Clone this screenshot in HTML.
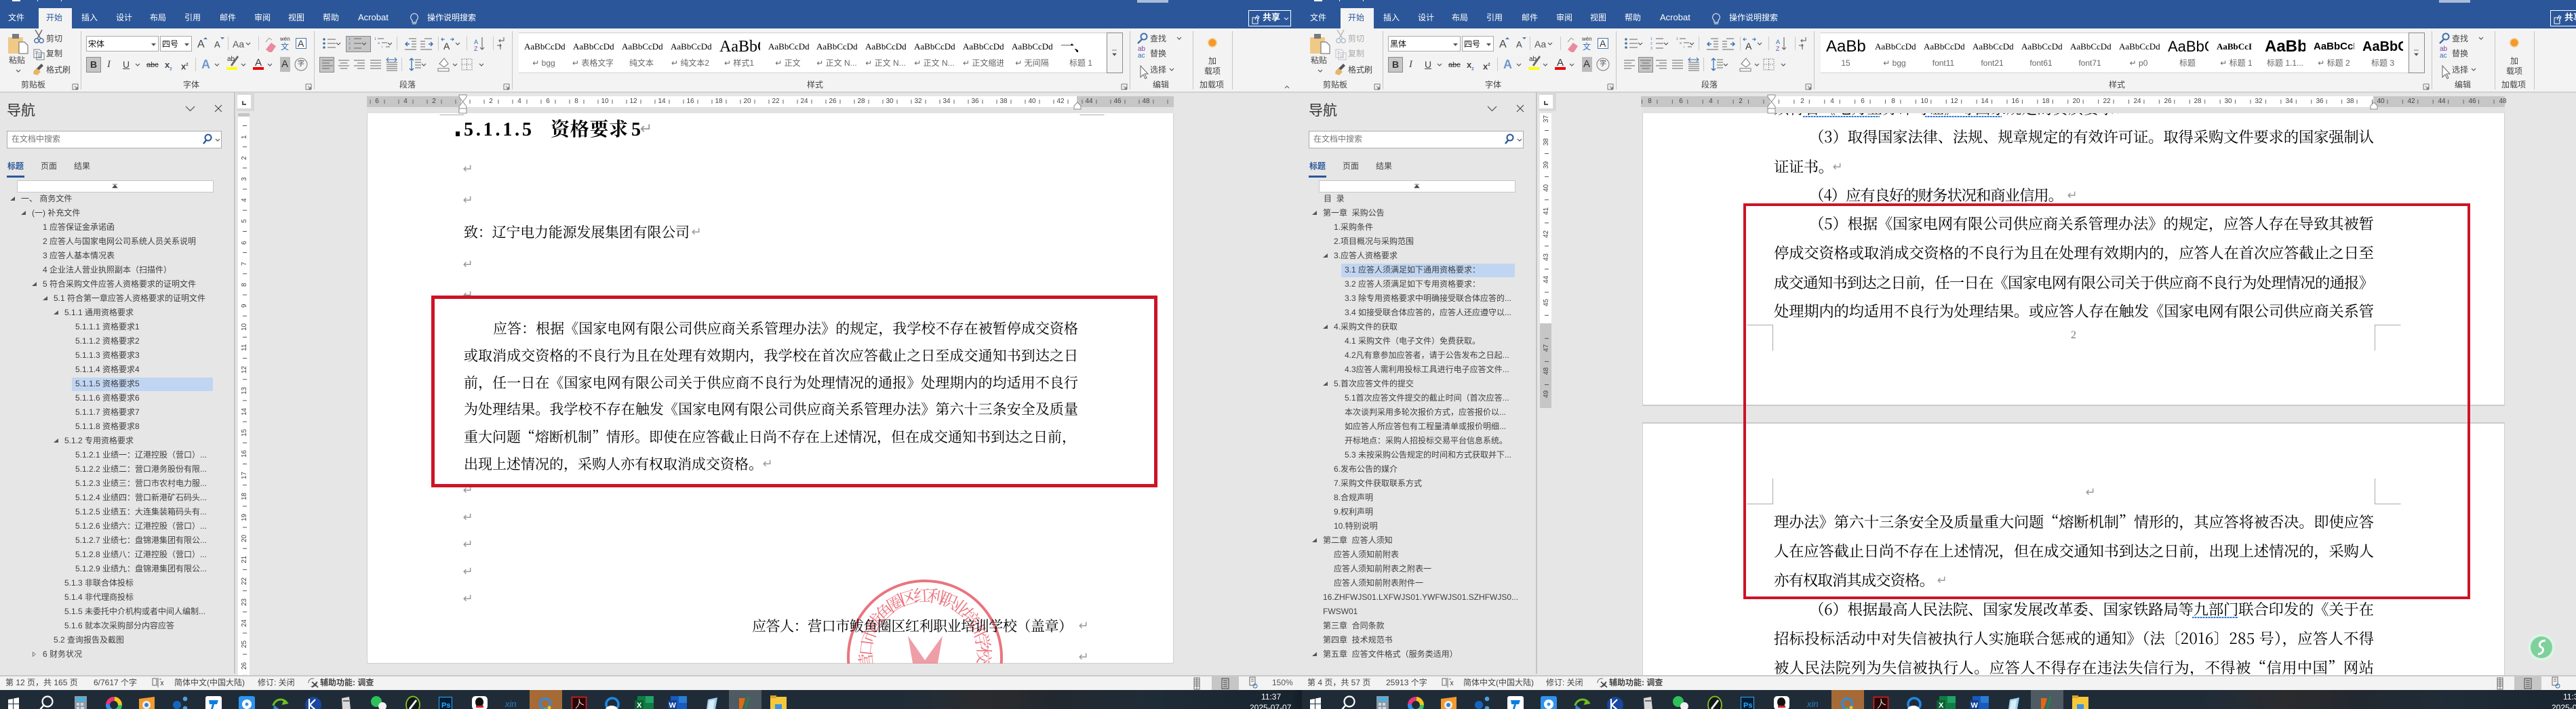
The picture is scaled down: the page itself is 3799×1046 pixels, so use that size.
<!DOCTYPE html>
<html lang="zh-CN"><head><meta charset="utf-8"><title>Word</title>
<style>
html,body{margin:0;padding:0;width:3799px;height:1046px;overflow:hidden;background:#e6e6e6}
body{position:relative;font-family:"Liberation Sans","Noto Sans CJK SC",sans-serif}
.w{position:absolute;top:0;height:1046px;overflow:hidden;background:#e6e6e6}
.a{position:absolute}
.t{position:absolute;white-space:nowrap;line-height:14px;font-size:12px;color:#444}
.tab{color:#fff;top:19px}
.bar{left:0;top:0;width:1920px;height:42px;background:#2b579a}
.rib{left:0;top:42px;width:1920px;height:93px;background:#f3f3f3;border-bottom:2px solid #d2d2d2}
.box{background:#fff;border:1px solid #ababab;box-sizing:border-box}
.hi{background:#c6c6c6;border:1px solid #8a8a8a;box-sizing:border-box}
.s{position:absolute;top:59px;width:60px;height:20px;overflow:hidden;white-space:nowrap;font:13px/20px "Liberation Serif","Noto Serif CJK SC",serif;color:#000}
.l{position:absolute;top:86px;width:60px;text-align:center;white-space:nowrap;overflow:hidden;font-size:12px;line-height:14px;color:#666}
.tree{position:absolute;top:283.2px;left:0;width:330px;font-size:12px;color:#404040}
.tree div{height:21px;line-height:21px;white-space:nowrap;position:relative}
.o{position:absolute;width:0;height:0;border-left:7px solid transparent;border-bottom:6px solid #555;top:7px;margin-left:-16px}
.c{position:absolute;width:5px;height:8px;top:6px;margin-left:-15px;background:#777;clip-path:polygon(0 0,100% 50%,0 100%,0 0,1px 2px,1px 6px,4px 4px,1px 2px)}
.rn{position:absolute;top:145px;width:24px;text-align:center;font-size:10px;line-height:10px;color:#444}
.vn{position:absolute;height:20px;width:12px;writing-mode:vertical-rl;transform:rotate(180deg);text-align:center;font-size:10px;line-height:12px;color:#444}
.d{font-family:"Noto Serif CJK SC",serif;font-size:21px;fill:#000}
.e{font-family:"Noto Serif CJK SC",serif;font-size:22.4px;fill:#000}
.rm{font-family:"DejaVu Sans",sans-serif;font-size:18px;fill:#9a9a9a;text-anchor:middle}
.sep{background:#c6c6c6;position:absolute;top:46px;width:1px;height:86px}
.sb{left:0;top:996px;width:1920px;height:22px;background:#f3f3f3;border-top:2px solid #c9c9c9;box-sizing:border-box}
.tb{left:0;top:1018px;width:1920px;height:28px;background:linear-gradient(90deg,#1f2c38 0,#1f2c38 1330px,#2b2b2e 1450px,#22282f 1560px,#1f2c38 1700px,#18242e 1905px,#141d26 1920px)}
.st{top:1000px}
.redbox{position:absolute;border:5px solid #cd1426;box-sizing:border-box}
.wv{position:absolute;height:2px;background:repeating-linear-gradient(90deg,#2a78d8 0 2px,#9cc3f0 2px 4px)}
</style></head><body>

<svg width="0" height="0" style="position:absolute">
<defs>
<symbol id="v" viewBox="0 0 8 5" overflow="visible"><path d="M1 1l3 3 3-3" fill="none" stroke="#555" stroke-width="1.2"/></symbol>
<symbol id="ln" viewBox="0 0 10 10"><path d="M1 1h8v8M1 1v8h8M4 4l4 4M8 5v3H5" fill="none" stroke="#777"/></symbol>

<symbol id="clip" viewBox="0 0 120 136" overflow="visible">
<path d="M55 57L62 44M60 57L52 44" stroke="#6a6a6a" stroke-width="1.5" fill="none"/>
<circle cx="54" cy="60" r="3.2" fill="none" stroke="#4a72a8" stroke-width="1.5"/><circle cx="61" cy="60" r="3.2" fill="none" stroke="#4a72a8" stroke-width="1.5"/>
<path d="M50 73h8l3 3v9h-11zM54 78h11v10h-11z" fill="#fff" stroke="#777"/><path d="M52 76h4M52 79h2M56 81h6M56 84h6" stroke="#4a72a8"/>
</symbol>

<symbol id="ri" viewBox="0 0 1920 136" overflow="visible">
<rect x="12" y="55" width="22" height="24" fill="#f0c987"/><rect x="18" y="50" width="10" height="7" fill="#7a7a7a"/>
<path d="M28 62h8l5 5v12h-13z" fill="#fff" stroke="#666"/>
<use href="#v" x="23" y="102" width="8" height="5"/>
<path d="M52 103l9-9 3 3-9 9z" fill="#555"/><path d="M50 104l5-3 5 5-5 5-6-2z" fill="#e6b567"/>
<g fill="none" stroke="#c9c9c9">
<path d="M336.500 54v20M381.500 54v20M288.500 85v20M585.500 54v20M646.500 54v20M688.500 54v20M727.500 54v20M592.500 85v20"/></g>
<use href="#ln" x="106" y="123" width="10" height="10"/><use href="#ln" x="450" y="123" width="10" height="10"/><use href="#ln" x="742" y="123" width="10" height="10"/><use href="#ln" x="1653" y="123" width="10" height="10"/>
<path d="M223 64h7l-3.500 4zM272 64h7l-3.500 4z" fill="#555"/>
<path d="M300 58l3-3 3 3z" fill="#4a72a8"/><path d="M325 55h6l-3 3z" fill="#4a72a8"/>
<use href="#v" x="362" y="62" width="8" height="5"/>
<path d="M392 73l8-10 7 5-6 9h-4z" fill="#e98aa0"/><path d="M392 62l5-6 4 3" stroke="#999" fill="none"/>
<rect x="436.500" y="56.500" width="15" height="15" fill="#fff" stroke="#4a72a8"/>
<use href="#v" x="199" y="93" width="8" height="5"/><use href="#v" x="316" y="93" width="8" height="5"/><use href="#v" x="355" y="93" width="8" height="5"/><use href="#v" x="394" y="93" width="8" height="5"/>
<rect x="334" y="99" width="16" height="4" fill="#ff0"/><path d="M340 96l10-14 2 2-10 14z" fill="#666"/>
<rect x="373" y="99" width="16" height="4" fill="#e00"/>
<rect x="413" y="84" width="15" height="22" fill="#bcbcbc"/>
<circle cx="444" cy="95" r="9" fill="none" stroke="#777"/>
<!-- paragraph row 1 -->
<g fill="#4a72a8"><circle cx="478" cy="58" r="1.800"/><circle cx="478" cy="64" r="1.800"/><circle cx="478" cy="70" r="1.800"/></g>
<path d="M483 58h12M483 64h12M483 70h12M522 57h11M522 64h11M522 71h11M557 57h9M563 63h8M569 69h6" stroke="#666" fill="none"/>
<g fill="#4a72a8" font-size="5" font-family="Liberation Sans"><text x="514" y="59">1</text><text x="514" y="66">2</text><text x="514" y="73">3</text><text x="552" y="59">1</text><text x="557" y="65">a</text><text x="563" y="71">i</text></g>
<use href="#v" x="495" y="62" width="8" height="5"/><use href="#v" x="533" y="62" width="8" height="5"/><use href="#v" x="571" y="62" width="8" height="5"/>
<path d="M603 57h11M607 61h7M607 65h7M607 69h7M597 73h17M626 57h11M620 73h17M620 61h7M620 65h7M620 69h7" stroke="#666" fill="none"/>
<path d="M604 65h-6m3-3l-3 3 3 3M632 65h6m-3-3l3 3-3 3" stroke="#2f6db5" fill="none" stroke-width="1.400"/>
<path d="M656 58h-5m2-2l-2 2 2 2M664 58h5m-2-2l2 2-2 2" stroke="#2f6db5" fill="none"/>
<use href="#v" x="671" y="62" width="8" height="5"/>
<path d="M711 55v18m-3-3l3 3 3-3" stroke="#555" fill="none"/>
<path d="M743 55v5h-7m2-2l-2 2 2 2M733 67h6m-2-2l2 2-2 2M738 65v8" stroke="#555" fill="none"/>
<!-- paragraph row 2 -->
<path d="M475 89h16M475 93h11M475 97h16M475 101h11M499 89h16M501.500 93h11M499 97h16M501.500 101h11M522 89h16M527 93h11M522 97h16M527 101h11M546 89h16M546 93h16M546 97h16M546 101h16" stroke="#666" fill="none"/>
<path d="M570 92h16M570 95h16M570 98h16M570 101h16M570 104h16" stroke="#666" fill="none"/><path d="M571 88h14m-12-3l-3 3 3 3m9-6l3 3-3 3" stroke="#2f6db5" fill="none"/>
<path d="M607 86v18m-3-15l3-3 3 3m-6 12l3 3 3-3" stroke="#2f6db5" fill="none" stroke-width="1.300"/>
<path d="M612 88h9M612 92h9M612 96h9M612 100h9" stroke="#666"/>
<use href="#v" x="621" y="93" width="8" height="5"/>
<path d="M648 94l7-8 6 8-6 5zM646 101h16v4h-16z" fill="#fff" stroke="#777"/>
<use href="#v" x="667" y="93" width="8" height="5"/>
<path d="M681 87h15v16h-15zM681 95h15M688.500 87v16" fill="none" stroke="#777" stroke-dasharray="1.500 1.500"/>
<use href="#v" x="706" y="93" width="8" height="5"/>
<!-- edit -->
<circle cx="1687" cy="54" r="4.500" fill="none" stroke="#3f6fb0" stroke-width="2"/><path d="M1684 58l-6 6" stroke="#3f6fb0" stroke-width="2.400"/>
<use href="#v" x="1735" y="54" width="8" height="5"/>
<path d="M1682 97v17l4-4 3 6 2-1-3-6h5z" fill="#fff" stroke="#666"/>
<use href="#v" x="1724" y="100" width="8" height="5"/>
<circle cx="1788" cy="63" r="5.500" fill="#f59a23"/><circle cx="1788" cy="63" r="7" fill="#f59a23" opacity=".35"/>
<path d="M1640 74h7M1641 79h5l-2.500 3z" fill="#555" stroke="#555" stroke-width=".8"/>
<path d="M1895 130l3-3 3 3" fill="none" stroke="#555"/>
<!-- lightbulb / share -->
<path d="M611 20a5.500 5.500 0 0 0-3 10v3h6v-3a5.500 5.500 0 0 0-3-10zM608 35h6" fill="none" stroke="#fff"/>
<rect x="1841.500" y="15.500" width="62" height="23" fill="none" stroke="#fff"/>
<path d="M1847 26h8v9h-8zM1851 29l3-6 3 2-3 6" fill="none" stroke="#fff"/>
<path d="M1894 26l3 3 3-3" fill="none" stroke="#fff"/>
<path d="M18 0h12v2h-12zM55 0h1v2h-1zM90 0h1v2h-1z" fill="#fff"/>
<rect x="1677" y="0" width="46" height="4" fill="#a9bcd8"/>
</symbol>

<symbol id="nv" viewBox="0 0 346 300" overflow="visible">
<path d="M274 157l6.500 6.500 6.500-6.500M317 155l10 10M327 155l-10 10" fill="none" stroke="#444" stroke-width="1.100"/>
<circle cx="307" cy="203" r="4.500" fill="none" stroke="#2b579a" stroke-width="2"/><path d="M304 207l-4 5" stroke="#2b579a" stroke-width="2.400"/>
<use href="#v" x="317" y="204" width="8" height="5"/>
<path d="M166 272h7M169.500 273l3.500 4h-7z" fill="#444" stroke="#444" stroke-width=".8"/>
</symbol>

<symbol id="tk" viewBox="0 1018 1920 28" overflow="visible">
<path d="M12 1032l7-1v7h-7zM20 1030.500l8-1.500v9h-8zM12 1039h7v7h-7zM20 1039h8v7h-8z" fill="#fff"/>
<circle cx="70" cy="1035" r="7.500" fill="none" stroke="#fff" stroke-width="2.200"/><path d="M64 1041l-5 6" stroke="#fff" stroke-width="2.400"/>
<rect x="110" y="1027" width="18" height="20" fill="#8c9aa6"/><rect x="112" y="1029" width="14" height="5" fill="#3bb6e8"/><path d="M113 1037h4v4h-4zM119 1037h4v4h-4zM113 1043h4v3h-4zM119 1043h5v3h-5z" fill="#d0d8de"/>
<circle cx="168" cy="1040" r="9" fill="none" stroke="#35c46a" stroke-width="6" stroke-dasharray="14 43"/><circle cx="168" cy="1040" r="9" fill="none" stroke="#f5c518" stroke-width="6" stroke-dasharray="14 43" stroke-dashoffset="14"/><circle cx="168" cy="1040" r="9" fill="none" stroke="#e8367a" stroke-width="6" stroke-dasharray="14 43" stroke-dashoffset="28"/><circle cx="168" cy="1040" r="9" fill="none" stroke="#2d8ff0" stroke-width="6" stroke-dasharray="14 43" stroke-dashoffset="42"/>
<path d="M205 1031l23-3v18h-23z" fill="#f39b2d"/><circle cx="216" cy="1040" r="6" fill="#e6eef5"/><circle cx="216" cy="1040" r="3" fill="#3a7cc2"/>
<circle cx="261" cy="1040" r="6" fill="#1565c0"/><circle cx="273" cy="1031" r="3.300" fill="#4aa3e0"/><circle cx="273" cy="1045" r="3.300" fill="#4aa3e0"/>
<rect x="303" y="1027" width="24" height="22" rx="3" fill="#fff"/><path d="M308 1033h14l-2 6h-4l-2 7h-3l2-7h-4z" fill="#0b7fe0"/>
<rect x="352" y="1027" width="24" height="22" rx="3" fill="#2e94ef"/><circle cx="364" cy="1039" r="7" fill="#fff"/><circle cx="364" cy="1039" r="2.500" fill="#2e94ef"/>
<path d="M403 1041a11 11 0 0 1 20-4l-5 1 2-5" fill="none" stroke="#6fbf1e" stroke-width="3"/><path d="M404 1040l9 7h-10z" fill="#2a8ad0"/>
<circle cx="462" cy="1040" r="12" fill="#1846a0"/><path d="M456 1031v18M457 1040l8-8M457 1040l9 8" stroke="#fff" stroke-width="2.200" fill="none"/>
<path d="M504 1030l11-2 2 18h-12z" fill="#d8d8d8"/><path d="M506 1033h9v2h-9z" fill="#666"/>
<circle cx="555" cy="1035" r="8" fill="#2dc15a"/><circle cx="564" cy="1042" r="6" fill="#f2f2f2"/>
<ellipse cx="609" cy="1040" rx="10" ry="12.500" fill="#10181a" stroke="#8cc21d" stroke-width="1.800"/><path d="M604 1046l10-13" stroke="#eee" stroke-width="3"/>
<rect x="647.500" y="1028.500" width="19" height="19" fill="#001e36" stroke="#31a8ff"/><text x="651" y="1044" font-size="11" font-weight="700" fill="#31a8ff" font-family="Liberation Sans">Ps</text>
<rect x="696" y="1027" width="23" height="20" rx="5" fill="#fff"/><ellipse cx="707" cy="1036" rx="6" ry="7" fill="#111"/><rect x="702" y="1041" width="11" height="3" fill="#d2232a"/><ellipse cx="707" cy="1046" rx="5" ry="2" fill="#eee"/>
<text x="745" y="1043" font-size="13" font-style="italic" fill="#2c7cc0" font-family="Liberation Sans">xin</text>
<rect x="781" y="1018" width="48" height="28" fill="#a56a36"/><circle cx="804" cy="1038" r="7.500" fill="none" stroke="#2a8de0" stroke-width="3"/><circle cx="810" cy="1044" r="2.500" fill="#f5c518"/><circle cx="804" cy="1046" r="2" fill="#4cba4c"/>
<rect x="843.500" y="1028.500" width="21" height="19" fill="#2a0505" stroke="#d82020" stroke-width="1.600"/><path d="M849 1045c5-4 6-9 5-14 0 5 3 8 7 9" fill="none" stroke="#eee"/>
<circle cx="903" cy="1039" r="9" fill="none" stroke="#1e88e5" stroke-width="3.500"/><path d="M893 1047a6 4 0 0 1 18 0z" fill="#fff"/>
<rect x="940" y="1027" width="24" height="20" fill="#107c41"/><rect x="952" y="1027" width="12" height="10" fill="#21a366"/><rect x="936" y="1033" width="13" height="13" fill="#0b5f33"/><text x="939" y="1044" font-size="11" font-weight="700" fill="#fff" font-family="Liberation Sans">X</text>
<rect x="989" y="1027" width="24" height="20" fill="#185abd"/><rect x="1001" y="1027" width="12" height="10" fill="#2b7cd3"/><rect x="985" y="1033" width="13" height="13" fill="#103f91"/><text x="986.500" y="1044" font-size="11" font-weight="700" fill="#fff" font-family="Liberation Sans">W</text>
<path d="M1044 1032l14-3-3 17h-13z" fill="#9fd0ea"/><path d="M1046 1034l8-2-2 14h-8z" fill="#d8eef8"/>
<rect x="1075" y="1018" width="48" height="28" fill="#4f5b63"/><path d="M1090 1030h9l-2 8-3 8h-4z" fill="#e06a12"/><path d="M1104 1028l-5 18" stroke="#1a8a4a" stroke-width="2.500"/>
<rect x="1136" y="1028" width="24" height="19" fill="#f5c73d"/><rect x="1136" y="1026" width="9" height="4" fill="#e0a020"/><rect x="1143" y="1039" width="10" height="8" fill="#3a92e0"/>
</symbol>
</defs></svg>

<!-- ================= LEFT WINDOW ================= -->
<div class="w" style="left:0;width:1920px">
<div class="a bar"></div>
<div class="a" style="left:57px;top:12px;width:49px;height:30px;background:#f3f3f3"></div>
<span class="t tab" style="left:12px">文件</span><span class="t tab" style="left:68px;color:#2b579a">开始</span><span class="t tab" style="left:120px">插入</span><span class="t tab" style="left:171px">设计</span><span class="t tab" style="left:221px">布局</span><span class="t tab" style="left:272px">引用</span><span class="t tab" style="left:324px">邮件</span><span class="t tab" style="left:375px">审阅</span><span class="t tab" style="left:425px">视图</span><span class="t tab" style="left:476px">帮助</span><span class="t tab" style="left:528px;font-size:13px">Acrobat</span><span class="t tab" style="left:630px">操作说明搜索</span>
<span class="t" style="left:1862px;top:19px;font-size:13px;color:#fff;font-weight:700">共享</span>
<div class="a rib"></div>
<div class="sep" style="left:119px"></div><div class="sep" style="left:463px"></div><div class="sep" style="left:755px"></div><div class="sep" style="left:1666px"></div><div class="sep" style="left:1759px"></div><div class="sep" style="left:1817px"></div>
<div class="a box" style="left:127px;top:53px;width:107px;height:23px"></div><div class="a box" style="left:236px;top:53px;width:47px;height:23px"></div>
<div class="a hi" style="left:510px;top:53px;width:37px;height:24px"></div>
<div class="a hi" style="left:127px;top:84px;width:22px;height:23px"></div>
<div class="a hi" style="left:471px;top:84px;width:22px;height:23px"></div>
<div class="a" style="left:765px;top:48px;width:890px;height:60px;background:#fff;border-top:1px solid #d0d0d0;border-bottom:1px solid #d0d0d0;box-sizing:border-box"></div>
<div class="a" style="left:1632px;top:48px;width:24px;height:60px;border:1px solid #8a8a8a;background:#f3f3f3;box-sizing:border-box"></div>
<svg class="a" style="left:0;top:0" width="1920" height="136" viewBox="0 0 1920 136"><use href="#ri" width="1920" height="136"/><use href="#clip" width="120" height="136"/></svg>
<span class="t" style="left:13px;top:82px">粘贴</span><span class="t" style="left:68px;top:50px">剪切</span><span class="t" style="left:68px;top:72px">复制</span><span class="t" style="left:68px;top:96px">格式刷</span>
<span class="t" style="left:31px;top:118px">剪贴板</span><span class="t" style="left:270px;top:118px">字体</span><span class="t" style="left:589px;top:118px">段落</span><span class="t" style="left:1190px;top:118px">样式</span><span class="t" style="left:1700px;top:118px">编辑</span><span class="t" style="left:1769px;top:118px">加载项</span>
<span class="t" style="left:130px;top:58px;color:#111">宋体</span><span class="t" style="left:239px;top:58px;color:#111">四号</span>
<span class="t" style="left:291px;top:59px;font-size:16px">A</span><span class="t" style="left:316px;top:59px;font-size:13px">A</span><span class="t" style="left:343px;top:58px;font-size:14px;color:#555">Aa</span>
<span class="t" style="left:413px;top:51px;font-size:8px;color:#333">wén</span><span class="t" style="left:414px;top:62px;color:#2f6db5">文</span><span class="t" style="left:439px;top:57px;font-size:14px;color:#333">A</span>
<span class="t" style="left:133px;top:88px;font-size:14px;font-weight:700;color:#333">B</span><span class="t" style="left:158px;top:88px;font:italic 15px/14px 'Liberation Serif',serif">I</span><span class="t" style="left:181px;top:88px;font-size:14px;text-decoration:underline">U</span><span class="t" style="left:216px;top:89px;font-size:11px;text-decoration:line-through;color:#333">abc</span><span class="t" style="left:243px;top:89px;font-size:13px;font-weight:700">x<sub style="font-size:6px;color:#3f6fb0">2</sub></span><span class="t" style="left:267px;top:89px;font-size:13px;font-weight:700">x<sup style="font-size:6px">2</sup></span>
<span class="t" style="left:297px;top:88px;font-size:18px;font-weight:700;color:#6f98cc">A</span><span class="t" style="left:335px;top:81px;font-size:10px;color:#333">ab</span><span class="t" style="left:376px;top:86px;font-size:15px;color:#333">A</span><span class="t" style="left:415px;top:88px;font-size:15px;color:#333">A</span><span class="t" style="left:439px;top:88px;font-size:10px">字</span>
<span class="t" style="left:654px;top:61px;font-size:14px;color:#333">A</span><span class="t" style="left:699px;top:55px;font-size:9px;color:#2f6db5">A</span><span class="t" style="left:699px;top:65px;font-size:9px;color:#7a3fa5">Z</span>
<span class="s" style="left:773px">AaBbCcDdI</span><span class="l" style="left:772px">↵ bgg</span>
<span class="s" style="left:845px">AaBbCcDd</span><span class="l" style="left:844px">↵ 表格文字</span>
<span class="s" style="left:917px">AaBbCcDdI</span><span class="l" style="left:916px">纯文本</span>
<span class="s" style="left:989px">AaBbCcDdI</span><span class="l" style="left:988px">↵ 纯文本2</span>
<span class="s" style="left:1061px;font-size:24px;top:55px;height:28px;line-height:28px">AaBbC(</span><span class="l" style="left:1060px">↵ 样式1</span>
<span class="s" style="left:1133px">AaBbCcDd</span><span class="l" style="left:1132px">↵ 正文</span>
<span class="s" style="left:1204px">AaBbCcDd</span><span class="l" style="left:1204px">↵ 正文 N...</span>
<span class="s" style="left:1276px">AaBbCcDd</span><span class="l" style="left:1276px">↵ 正文 N...</span>
<span class="s" style="left:1348px">AaBbCcDd</span><span class="l" style="left:1348px">↵ 正文 N...</span>
<span class="s" style="left:1420px">AaBbCcDd</span><span class="l" style="left:1420px">↵ 正文缩进</span>
<span class="s" style="left:1492px">AaBbCcDd</span><span class="l" style="left:1492px">↵ 无间隔</span>
<span class="s" style="left:1564px;font-size:20px;font-weight:700;top:55px;height:28px;line-height:28px">一、</span><span class="l" style="left:1564px">标题 1</span>
<span class="t" style="left:1696px;top:50px">查找</span><span class="t" style="left:1696px;top:72px">替换</span><span class="t" style="left:1696px;top:96px">选择</span>
<span class="t" style="left:1678px;top:68px;font-size:10px;color:#7a3fa5;line-height:10px">ab</span><span class="t" style="left:1678px;top:78px;font-size:10px;color:#2f6db5;line-height:10px">ac</span>
<span class="t" style="left:1782px;top:83px">加</span><span class="t" style="left:1776px;top:98px">载项</span>

<!-- nav -->
<span class="t" style="left:10px;top:152px;font-size:21px;line-height:24px;color:#333">导航</span>
<div class="a" style="left:10px;top:193px;width:317px;height:26px;background:#fff;border:1px solid #ababab;box-sizing:border-box"></div>
<span class="t" style="left:17px;top:198px;color:#777">在文档中搜索</span>
<span class="t" style="left:11px;top:238px;color:#2b579a;font-weight:700">标题</span><span class="t" style="left:60px;top:238px">页面</span><span class="t" style="left:109px;top:238px">结果</span>
<div class="a" style="left:10px;top:259px;width:26px;height:3px;background:#2b579a"></div>
<div class="a" style="left:25px;top:266px;width:290px;height:18px;background:#fff;border:1px solid #c6c6c6;box-sizing:border-box"></div>
<div class="a" style="left:106px;top:557px;width:208px;height:20px;background:#c0d5f2"></div>
<svg class="a" style="left:0;top:0" width="346" height="300" viewBox="0 0 346 300"><use href="#nv" width="346" height="300"/></svg>
<div class="tree">
<div style="padding-left:31px"><i class="o"></i>一、&nbsp;商务文件</div>
<div style="padding-left:47px"><i class="o"></i>(一) 补充文件</div>
<div style="padding-left:63px">1 应答保证金承诺函</div>
<div style="padding-left:63px">2 应答人与国家电网公司系统人员关系说明</div>
<div style="padding-left:63px">3 应答人基本情况表</div>
<div style="padding-left:63px">4 企业法人营业执照副本（扫描件）</div>
<div style="padding-left:63px"><i class="o"></i>5 符合采购文件应答人资格要求的证明文件</div>
<div style="padding-left:79px"><i class="o"></i>5.1 符合第一章应答人资格要求的证明文件</div>
<div style="padding-left:95px"><i class="o"></i>5.1.1 通用资格要求</div>
<div style="padding-left:111px">5.1.1.1 资格要求1</div>
<div style="padding-left:111px">5.1.1.2 资格要求2</div>
<div style="padding-left:111px">5.1.1.3 资格要求3</div>
<div style="padding-left:111px">5.1.1.4 资格要求4</div>
<div style="padding-left:111px">5.1.1.5 资格要求5</div>
<div style="padding-left:111px">5.1.1.6 资格要求6</div>
<div style="padding-left:111px">5.1.1.7 资格要求7</div>
<div style="padding-left:111px">5.1.1.8 资格要求8</div>
<div style="padding-left:95px"><i class="o"></i>5.1.2 专用资格要求</div>
<div style="padding-left:111px">5.1.2.1 业绩一：辽港控股（营口）...</div>
<div style="padding-left:111px">5.1.2.2 业绩二：营口港务股份有限...</div>
<div style="padding-left:111px">5.1.2.3 业绩三：营口市农村电力服...</div>
<div style="padding-left:111px">5.1.2.4 业绩四：营口新港矿石码头...</div>
<div style="padding-left:111px">5.1.2.5 业绩五：大连集装箱码头有...</div>
<div style="padding-left:111px">5.1.2.6 业绩六：辽港控股（营口）...</div>
<div style="padding-left:111px">5.1.2.7 业绩七：盘锦港集团有限公...</div>
<div style="padding-left:111px">5.1.2.8 业绩八：辽港控股（营口）...</div>
<div style="padding-left:111px">5.1.2.9 业绩九：盘锦港集团有限公...</div>
<div style="padding-left:95px">5.1.3 非联合体投标</div>
<div style="padding-left:95px">5.1.4 非代理商投标</div>
<div style="padding-left:95px">5.1.5 未委托中介机构或者中间人编制...</div>
<div style="padding-left:95px">5.1.6 就本次采购部分内容应答</div>
<div style="padding-left:79px">5.2 查询报告及截图</div>
<div style="padding-left:63px"><i class="c"></i>6 财务状况</div>
</div>
<div class="a" style="left:345px;top:136px;width:2px;height:858px;background:#c4c4c4"></div>

<!-- vertical ruler -->
<div class="a" style="left:349px;top:136px;width:26px;height:28px;background:#d8d8d8"></div>
<div class="a" style="left:350px;top:140px;width:20px;height:20px;background:#fff"></div>
<div class="a" style="left:357px;top:149px;width:2px;height:6px;background:#555"></div><div class="a" style="left:357px;top:153px;width:6px;height:2px;background:#555"></div>
<div class="a" style="left:351px;top:167px;width:17px;height:5px;background:#c6c6c6"></div>
<div class="a" style="left:351px;top:172px;width:17px;height:824px;background:#fff"></div>
<div class="a" style="left:358px;top:172px;width:6px;height:824px;background:linear-gradient(#555 1px,transparent 1px) 0 13px/6px 31.19px repeat-y"></div>
<span class="vn" style="left:355px;top:192px">1</span><span class="vn" style="left:355px;top:223px">2</span><span class="vn" style="left:355px;top:254px">3</span><span class="vn" style="left:355px;top:285px">4</span><span class="vn" style="left:355px;top:316px">5</span><span class="vn" style="left:355px;top:348px">6</span><span class="vn" style="left:355px;top:379px">7</span><span class="vn" style="left:355px;top:410px">8</span><span class="vn" style="left:355px;top:441px">9</span><span class="vn" style="left:355px;top:472px">10</span><span class="vn" style="left:355px;top:503px">11</span><span class="vn" style="left:355px;top:535px">12</span><span class="vn" style="left:355px;top:566px">13</span><span class="vn" style="left:355px;top:597px">14</span><span class="vn" style="left:355px;top:628px">15</span><span class="vn" style="left:355px;top:659px">16</span><span class="vn" style="left:355px;top:691px">17</span><span class="vn" style="left:355px;top:722px">18</span><span class="vn" style="left:355px;top:753px">19</span><span class="vn" style="left:355px;top:784px">20</span><span class="vn" style="left:355px;top:815px">21</span><span class="vn" style="left:355px;top:847px">22</span><span class="vn" style="left:355px;top:878px">23</span><span class="vn" style="left:355px;top:909px">24</span><span class="vn" style="left:355px;top:940px">25</span><span class="vn" style="left:355px;top:972px">26</span>

<!-- page -->
<div class="a" style="left:541px;top:167px;width:1190px;height:812px;background:#fff;border:1px solid #cfcfcf;border-top:0;box-sizing:border-box"></div>
<svg class="a" style="left:541px;top:167px" width="1190" height="812" viewBox="541 167 1190 812">
<path d="M648.500 169.500h36M1592.500 169.500h36" stroke="#aaa" fill="none"/>
<g opacity=".72">
<circle cx="1364" cy="970" r="113" fill="none" stroke="#e2404f" stroke-width="4"/>
<path id="sa" d="M1289 987A78 78 0 1 1 1439 987" fill="none"/>
<text font-family="Noto Serif CJK SC,serif" font-size="25" fill="#e2404f"><textPath href="#sa" textLength="280">营口市鲅鱼圈区红利职业培训学校</textPath></text>
<path d="M1339 938l25 36 26-36-8 46 8 10h-52l9-10z" fill="#ea7885"/>
</g>
<text x="684" y="200" font-family="Liberation Serif,serif" font-size="28" font-weight="700" fill="#000" textLength="100">5.1.1.5</text>
<rect x="672" y="194" width="6" height="7" fill="#000"/>
<text x="812" y="200" font-family="Noto Serif CJK SC,serif" font-size="28" font-weight="700" fill="#000" textLength="114">资格要求</text>
<text x="931" y="200" font-family="Liberation Serif,serif" font-size="28" font-weight="700" fill="#000">5</text>
<text class="rm" x="953" y="197" style="font-size:22px">↵</text>
<text class="rm" x="690" y="255">↵</text><text class="rm" x="690" y="301">↵</text>
<text class="d" x="684" y="350" textLength="333">致：辽宁电力能源发展集团有限公司</text><text class="rm" x="1027" y="348">↵</text>
<text class="rm" x="690" y="396">↵</text><text class="rm" x="690" y="441">↵</text>
<text class="d" x="727" y="492" textLength="863">应答：根据《国家电网有限公司供应商关系管理办法》的规定，我学校不存在被暂停成交资格</text>
<text class="d" x="684" y="532" textLength="906">或取消成交资格的不良行为且在处理有效期内，我学校在首次应答截止之日至成交通知书到达之日</text>
<text class="d" x="684" y="572" textLength="906">前，任一日在《国家电网有限公司关于供应商不良行为处理情况的通报》处理期内的均适用不良行</text>
<text class="d" x="684" y="611" textLength="906">为处理结果。我学校不存在触发《国家电网有限公司供应商关系管理办法》第六十三条安全及质量</text>
<text class="d" x="684" y="652" textLength="903">重大问题“熔断机制”情形。即使在应答截止日尚不存在上述情况，但在成交通知书到达之日前，</text>
<text class="d" x="684" y="692" textLength="441">出现上述情况的，采购人亦有权取消成交资格。</text><text class="rm" x="1132" y="690">↵</text>
<text class="rm" x="690" y="729">↵</text><text class="rm" x="690" y="769">↵</text><text class="rm" x="690" y="809">↵</text><text class="rm" x="690" y="849">↵</text><text class="rm" x="690" y="889">↵</text>
<text class="d" x="1109" y="931" textLength="473">应答人：营口市鲅鱼圈区红利职业培训学校（盖章）</text><text class="rm" x="1598" y="929">↵</text>
<text class="rm" x="1598" y="975">↵</text>
</svg>
<div class="redbox" style="left:636px;top:436px;width:1071px;height:283px"></div>

<!-- horizontal ruler -->
<div class="a" style="left:541px;top:158px;width:1190px;height:9px;background:#e2e2e2"></div>
<div class="a" style="left:541px;top:142px;width:139px;height:16px;background:#c6c6c6"></div>
<div class="a" style="left:680px;top:142px;width:908px;height:16px;background:#fff"></div>
<div class="a" style="left:1588px;top:142px;width:143px;height:16px;background:#c6c6c6"></div>
<div class="a" style="left:541px;top:147px;width:1190px;height:6px;background:linear-gradient(90deg,#666 1px,transparent 1px) 4.500px 0/21px 6px repeat-x"></div>
<span class="rn" style="left:544px">6</span><span class="rn" style="left:586px">4</span><span class="rn" style="left:628px">2</span>
<span class="rn" style="left:712px">2</span><span class="rn" style="left:754px">4</span><span class="rn" style="left:796px">6</span><span class="rn" style="left:838px">8</span><span class="rn" style="left:880px">10</span><span class="rn" style="left:922px">12</span><span class="rn" style="left:964px">14</span><span class="rn" style="left:1006px">16</span><span class="rn" style="left:1048px">18</span><span class="rn" style="left:1090px">20</span><span class="rn" style="left:1132px">22</span><span class="rn" style="left:1174px">24</span><span class="rn" style="left:1216px">26</span><span class="rn" style="left:1258px">28</span><span class="rn" style="left:1300px">30</span><span class="rn" style="left:1342px">32</span><span class="rn" style="left:1384px">34</span><span class="rn" style="left:1426px">36</span><span class="rn" style="left:1468px">38</span><span class="rn" style="left:1510px">40</span><span class="rn" style="left:1552px">42</span><span class="rn" style="left:1594px">44</span><span class="rn" style="left:1636px">46</span><span class="rn" style="left:1678px">48</span>
<svg class="a" style="left:670px;top:136px" width="30" height="32" viewBox="670 136 30 32"><path d="M677 140h11v3l-5.500 7-5.500-7zM682.500 150l5.500 7v3h-11v-3zM677 160h11v7h-11z" fill="#fff" stroke="#888"/></svg>
<svg class="a" style="left:1580px;top:150px" width="20" height="12" viewBox="1580 150 20 12"><path d="M1584 156l5-5 5 5v5h-10z" fill="#fff" stroke="#888"/></svg>

<!-- status -->
<div class="a sb"></div>
<span class="t st" style="left:8px">第 12 页，共 165 页</span><span class="t st" style="left:138px">6/7617 个字</span>
<svg class="a" style="left:224px;top:999px" width="18" height="16" viewBox="0 0 18 16"><path d="M1 2h6v10H1zM9 1v14M11 3h3" fill="none" stroke="#666"/><path d="M13 6l4 6M17 6l-4 6" stroke="#555"/></svg>
<span class="t st" style="left:257px">简体中文(中国大陆)</span><span class="t st" style="left:380px">修订: 关闭</span>
<svg class="a" style="left:453px;top:999px" width="18" height="17" viewBox="0 0 18 17"><circle cx="8" cy="8" r="6" fill="none" stroke="#666" stroke-dasharray="12 6"/><path d="M7 7l9 8M15 7l-8 8" stroke="#444" stroke-width="1.600"/></svg>
<span class="t st" style="left:472px;font-weight:700">辅助功能: 调查</span>
<div class="a" style="left:1787px;top:998px;width:40px;height:20px;background:#c6c6c6"></div>
<svg class="a" style="left:1755px;top:998px" width="105" height="20" viewBox="1755 998 105 20"><path d="M1761 1000h8v17h-8zM1761 1003h8M1761 1006h8M1761 1009h8M1761 1012h8M1765 1000v17" fill="none" stroke="#666"/><path d="M1802 1001h10v15h-10zM1804 1004h6M1804 1007h6M1804 1010h6M1804 1013h6" fill="none" stroke="#444"/><path d="M1843 999h8v12h-8zM1845 1002h4M1845 1005h4" fill="none" stroke="#666"/><circle cx="1851" cy="1012" r="3" fill="none" stroke="#2f6db5"/></svg>
<span class="t st" style="left:1876px;color:#555">150%</span>

<div class="a tb"></div>
<svg class="a" style="left:0;top:1018px" width="1920" height="28" viewBox="0 1018 1920 28"><use href="#tk" y="1018" width="1920" height="28"/></svg>
<span class="t" style="left:1860px;top:1021px;color:#fff">11:37</span><span class="t" style="left:1843px;top:1037px;color:#fff">2025-07-07</span>
</div>

<!-- ================= RIGHT WINDOW ================= -->
<div class="w" style="left:1920px;width:1879px">
<div class="a bar"></div>
<div class="a" style="left:57px;top:12px;width:49px;height:30px;background:#f3f3f3"></div>
<span class="t tab" style="left:12px">文件</span><span class="t tab" style="left:68px;color:#2b579a">开始</span><span class="t tab" style="left:120px">插入</span><span class="t tab" style="left:171px">设计</span><span class="t tab" style="left:221px">布局</span><span class="t tab" style="left:272px">引用</span><span class="t tab" style="left:324px">邮件</span><span class="t tab" style="left:375px">审阅</span><span class="t tab" style="left:425px">视图</span><span class="t tab" style="left:476px">帮助</span><span class="t tab" style="left:528px;font-size:13px">Acrobat</span><span class="t tab" style="left:630px">操作说明搜索</span>
<span class="t" style="left:1862px;top:19px;font-size:13px;color:#fff;font-weight:700">共享</span>
<div class="a rib"></div>
<div class="sep" style="left:119px"></div><div class="sep" style="left:463px"></div><div class="sep" style="left:755px"></div><div class="sep" style="left:1666px"></div><div class="sep" style="left:1759px"></div><div class="sep" style="left:1817px"></div>
<div class="a box" style="left:127px;top:53px;width:107px;height:23px"></div><div class="a box" style="left:236px;top:53px;width:47px;height:23px"></div>
<div class="a hi" style="left:127px;top:84px;width:22px;height:23px"></div>
<div class="a hi" style="left:496px;top:84px;width:22px;height:23px"></div>
<div class="a" style="left:765px;top:48px;width:890px;height:60px;background:#fff;border-top:1px solid #d0d0d0;border-bottom:1px solid #d0d0d0;box-sizing:border-box"></div>
<div class="a" style="left:1632px;top:48px;width:24px;height:60px;border:1px solid #8a8a8a;background:#f3f3f3;box-sizing:border-box"></div>
<svg class="a" style="left:0;top:0" width="1920" height="136" viewBox="0 0 1920 136"><use href="#ri" width="1920" height="136"/><use href="#clip" width="120" height="136" opacity=".4"/></svg>
<span class="t" style="left:13px;top:82px">粘贴</span><span class="t" style="left:68px;top:50px;color:#aaa">剪切</span><span class="t" style="left:68px;top:72px;color:#aaa">复制</span><span class="t" style="left:68px;top:96px">格式刷</span>
<span class="t" style="left:31px;top:118px">剪贴板</span><span class="t" style="left:270px;top:118px">字体</span><span class="t" style="left:589px;top:118px">段落</span><span class="t" style="left:1190px;top:118px">样式</span><span class="t" style="left:1700px;top:118px">编辑</span><span class="t" style="left:1769px;top:118px">加载项</span>
<span class="t" style="left:130px;top:58px;color:#111">黑体</span><span class="t" style="left:239px;top:58px;color:#111">四号</span>
<span class="t" style="left:291px;top:59px;font-size:16px">A</span><span class="t" style="left:316px;top:59px;font-size:13px">A</span><span class="t" style="left:343px;top:58px;font-size:14px;color:#555">Aa</span>
<span class="t" style="left:413px;top:51px;font-size:8px;color:#333">wén</span><span class="t" style="left:414px;top:62px;color:#2f6db5">文</span><span class="t" style="left:439px;top:57px;font-size:14px;color:#333">A</span>
<span class="t" style="left:133px;top:88px;font-size:14px;font-weight:700;color:#333">B</span><span class="t" style="left:158px;top:88px;font:italic 15px/14px 'Liberation Serif',serif">I</span><span class="t" style="left:181px;top:88px;font-size:14px;text-decoration:underline">U</span><span class="t" style="left:216px;top:89px;font-size:11px;text-decoration:line-through;color:#333">abc</span><span class="t" style="left:243px;top:89px;font-size:13px;font-weight:700">x<sub style="font-size:6px;color:#3f6fb0">2</sub></span><span class="t" style="left:267px;top:89px;font-size:13px;font-weight:700">x<sup style="font-size:6px">2</sup></span>
<span class="t" style="left:297px;top:88px;font-size:18px;font-weight:700;color:#6f98cc">A</span><span class="t" style="left:335px;top:81px;font-size:10px;color:#333">ab</span><span class="t" style="left:376px;top:86px;font-size:15px;color:#333">A</span><span class="t" style="left:415px;top:88px;font-size:15px;color:#333">A</span><span class="t" style="left:439px;top:88px;font-size:10px">字</span>
<span class="t" style="left:654px;top:61px;font-size:14px;color:#333">A</span><span class="t" style="left:699px;top:55px;font-size:9px;color:#2f6db5">A</span><span class="t" style="left:699px;top:65px;font-size:9px;color:#7a3fa5">Z</span>
<span class="s" style="left:773px;font:24px/28px 'Liberation Sans',sans-serif;top:55px;height:28px">AaBb(</span><span class="l" style="left:772px">15</span>
<span class="s" style="left:845px">AaBbCcDdI</span><span class="l" style="left:844px">↵ bgg</span>
<span class="s" style="left:917px">AaBbCcDd</span><span class="l" style="left:916px">font11</span>
<span class="s" style="left:989px">AaBbCcDdI</span><span class="l" style="left:988px">font21</span>
<span class="s" style="left:1061px">AaBbCcDdI</span><span class="l" style="left:1060px">font61</span>
<span class="s" style="left:1133px">AaBbCcDdI</span><span class="l" style="left:1132px">font71</span>
<span class="s" style="left:1205px">AaBbCcDd</span><span class="l" style="left:1204px">↵ p0</span>
<span class="s" style="left:1277px;font:22px/28px 'Liberation Sans',sans-serif;top:55px;height:28px">AaBbC</span><span class="l" style="left:1276px">标题</span>
<span class="s" style="left:1349px;font-weight:700">AaBbCcI</span><span class="l" style="left:1348px">↵ 标题 1</span>
<span class="s" style="left:1420px;font:700 24px/28px 'Liberation Sans',sans-serif;top:55px;height:28px">AaBb(</span><span class="l" style="left:1420px">标题 1.1...</span>
<span class="s" style="left:1492px;font:700 15px/20px 'Liberation Sans',sans-serif">AaBbCcI</span><span class="l" style="left:1492px">↵ 标题 2</span>
<span class="s" style="left:1564px;font:700 20px/28px 'Liberation Sans',sans-serif;top:55px;height:28px">AaBbC</span><span class="l" style="left:1564px">标题 3</span>
<span class="t" style="left:1696px;top:50px">查找</span><span class="t" style="left:1696px;top:72px">替换</span><span class="t" style="left:1696px;top:96px">选择</span>
<span class="t" style="left:1678px;top:68px;font-size:10px;color:#7a3fa5;line-height:10px">ab</span><span class="t" style="left:1678px;top:78px;font-size:10px;color:#2f6db5;line-height:10px">ac</span>
<span class="t" style="left:1782px;top:83px">加</span><span class="t" style="left:1776px;top:98px">载项</span>

<!-- nav -->
<span class="t" style="left:10px;top:152px;font-size:21px;line-height:24px;color:#333">导航</span>
<div class="a" style="left:10px;top:193px;width:317px;height:26px;background:#fff;border:1px solid #ababab;box-sizing:border-box"></div>
<span class="t" style="left:17px;top:198px;color:#777">在文档中搜索</span>
<span class="t" style="left:11px;top:238px;color:#2b579a;font-weight:700">标题</span><span class="t" style="left:60px;top:238px">页面</span><span class="t" style="left:109px;top:238px">结果</span>
<div class="a" style="left:10px;top:259px;width:26px;height:3px;background:#2b579a"></div>
<div class="a" style="left:25px;top:266px;width:290px;height:18px;background:#fff;border:1px solid #c6c6c6;box-sizing:border-box"></div>
<div class="a" style="left:58px;top:389px;width:256px;height:20px;background:#c0d5f2"></div>
<svg class="a" style="left:0;top:0" width="346" height="300" viewBox="0 0 346 300"><use href="#nv" width="346" height="300"/></svg>
<div class="tree">
<div style="padding-left:32px">目&nbsp;&nbsp;录</div>
<div style="padding-left:31px"><i class="o"></i>第一章&nbsp;&nbsp;采购公告</div>
<div style="padding-left:47px">1.采购条件</div>
<div style="padding-left:47px">2.项目概况与采购范围</div>
<div style="padding-left:47px"><i class="o"></i>3.应答人资格要求</div>
<div style="padding-left:63px">3.1 应答人须满足如下通用资格要求：</div>
<div style="padding-left:63px">3.2 应答人须满足如下专用资格要求：</div>
<div style="padding-left:63px">3.3 除专用资格要求中明确接受联合体应答的...</div>
<div style="padding-left:63px">3.4 如接受联合体应答的，应答人还应遵守以...</div>
<div style="padding-left:47px"><i class="o"></i>4.采购文件的获取</div>
<div style="padding-left:63px">4.1 采购文件（电子文件）免费获取。</div>
<div style="padding-left:63px">4.2凡有意参加应答者，请于公告发布之日起...</div>
<div style="padding-left:63px">4.3应答人需利用投标工具进行电子应答文件...</div>
<div style="padding-left:47px"><i class="o"></i>5.首次应答文件的提交</div>
<div style="padding-left:63px">5.1首次应答文件提交的截止时间（首次应答...</div>
<div style="padding-left:63px">本次谈判采用多轮次报价方式，应答报价以...</div>
<div style="padding-left:63px">如应答人所应答包有工程量清单或报价明细...</div>
<div style="padding-left:63px">开标地点：采购人招投标交易平台信息系统。</div>
<div style="padding-left:63px">5.3 未按采购公告规定的时间和方式获取并下...</div>
<div style="padding-left:47px">6.发布公告的媒介</div>
<div style="padding-left:47px">7.采购文件获取联系方式</div>
<div style="padding-left:47px">8.合规声明</div>
<div style="padding-left:47px">9.权利声明</div>
<div style="padding-left:47px">10.特别说明</div>
<div style="padding-left:31px"><i class="o"></i>第二章&nbsp;&nbsp;应答人须知</div>
<div style="padding-left:47px">应答人须知前附表</div>
<div style="padding-left:47px">应答人须知前附表之附表一</div>
<div style="padding-left:47px">应答人须知前附表附件一</div>
<div style="padding-left:31px">16.ZHFWJS01.LXFWJS01.YWFWJS01.SZHFWJS0...</div>
<div style="padding-left:31px">FWSW01</div>
<div style="padding-left:31px">第三章&nbsp;&nbsp;合同条款</div>
<div style="padding-left:31px">第四章&nbsp;&nbsp;技术规范书</div>
<div style="padding-left:31px"><i class="o"></i>第五章&nbsp;&nbsp;应答文件格式（服务类适用）</div>
</div>
<div class="a" style="left:345px;top:136px;width:2px;height:858px;background:#c4c4c4"></div>

<!-- vertical ruler -->
<div class="a" style="left:349px;top:136px;width:26px;height:28px;background:#d8d8d8"></div>
<div class="a" style="left:350px;top:140px;width:20px;height:20px;background:#fff"></div>
<div class="a" style="left:357px;top:149px;width:2px;height:6px;background:#555"></div><div class="a" style="left:357px;top:153px;width:6px;height:2px;background:#555"></div>
<div class="a" style="left:351px;top:167px;width:17px;height:310px;background:#fff"></div>
<div class="a" style="left:351px;top:477px;width:17px;height:125px;background:#c6c6c6"></div>
<div class="a" style="left:358px;top:167px;width:6px;height:434px;background:linear-gradient(#555 1px,transparent 1px) 0 25px/6px 34.100px repeat-y"></div>
<span class="vn" style="left:355px;top:165px">37</span><span class="vn" style="left:355px;top:199px">38</span><span class="vn" style="left:355px;top:233px">39</span><span class="vn" style="left:355px;top:267px">40</span><span class="vn" style="left:355px;top:301px">41</span><span class="vn" style="left:355px;top:335px">42</span><span class="vn" style="left:355px;top:369px">43</span><span class="vn" style="left:355px;top:402px">44</span><span class="vn" style="left:355px;top:436px">45</span><span class="vn" style="left:355px;top:503px">47</span><span class="vn" style="left:355px;top:537px">48</span><span class="vn" style="left:355px;top:571px">49</span>

<!-- pages -->
<div class="a" style="left:502px;top:167px;width:1272px;height:432px;background:#fff;border:1px solid #cfcfcf;border-top:0;border-bottom:2px solid #cbcbcb;box-sizing:border-box"></div>
<div class="a" style="left:502px;top:623px;width:1272px;height:373px;background:#fff;border:1px solid #cfcfcf;border-top:2px solid #cbcbcb;border-bottom:0;box-sizing:border-box"></div>
<svg class="a" style="left:502px;top:167px" width="1272" height="829" viewBox="502 167 1272 829">
<text class="e" x="696" y="168" textLength="525">须符合《电力业务许可证》等国家规定的资质要求：</text>
<text class="e" x="748" y="210" textLength="833">（3）取得国家法律、法规、规章规定的有效许可证。取得采购文件要求的国家强制认</text>
<text class="e" x="696" y="254" textLength="88">证证书。</text><text class="rm" x="790" y="252">↵</text>
<text class="e" x="748" y="296" textLength="375">（4）应有良好的财务状况和商业信用。</text><text class="rm" x="1136" y="294">↵</text>
<text class="e" x="748" y="338" textLength="833">（5）根据《国家电网有限公司供应商关系管理办法》的规定，应答人存在导致其被暂</text>
<text class="e" x="696" y="381" textLength="885">停成交资格或取消成交资格的不良行为且在处理有效期内的，应答人在首次应答截止之日至</text>
<text class="e" x="696" y="425" textLength="885">成交通知书到达之日前，任一日在《国家电网有限公司关于供应商不良行为处理情况的通报》</text>
<text class="e" x="696" y="467" textLength="885">处理期内的均适用不良行为处理结果。或应答人存在触发《国家电网有限公司供应商关系管</text>
<path d="M656.500 479.500h38v38M1582.500 517v-37.500h38" fill="none" stroke="#aaa"/>
<text x="1138" y="499" text-anchor="middle" font-family="Liberation Serif,serif" font-size="16" fill="#777">2</text>
<path d="M694.500 706v37.500h-38M1582.500 706v37.500h38" fill="none" stroke="#aaa"/>
<text class="rm" x="1163" y="732">↵</text>
<text class="e" x="696" y="778" textLength="885">理办法》第六十三条安全及质量重大问题“熔断机制”情形的，其应答将被否决。即使应答</text>
<text class="e" x="696" y="821" textLength="885">人在应答截止日尚不存在上述情况，但在成交通知书到达之日前，出现上述情况的，采购人</text>
<text class="e" x="696" y="864" textLength="237">亦有权取消其成交资格。</text><text class="rm" x="944" y="862">↵</text>
<text class="e" x="748" y="907" textLength="833">（6）根据最高人民法院、国家发展改革委、国家铁路局等九部门联合印发的《关于在</text>
<text class="e" x="696" y="950" textLength="885">招标投标活动中对失信被执行人实施联合惩戒的通知》（法〔2016〕285 号），应答人不得</text>
<text class="e" x="696" y="993" textLength="885">被人民法院列为失信被执行人。应答人不得存在违法失信行为，不得被“信用中国”网站</text>
</svg>
<div class="wv" style="left:739px;top:171px;width:113px"></div><div class="wv" style="left:919px;top:171px;width:113px"></div><div class="wv" style="left:1313px;top:910px;width:68px"></div>
<div class="redbox" style="left:651px;top:300px;width:1072px;height:584px;border-width:4px"></div>

<!-- horizontal ruler -->
<div class="a" style="left:502px;top:158px;width:1272px;height:9px;background:#e2e2e2"></div>
<div class="a" style="left:500px;top:142px;width:190px;height:16px;background:#c6c6c6"></div>
<div class="a" style="left:690px;top:142px;width:890px;height:16px;background:#fff"></div>
<div class="a" style="left:1580px;top:142px;width:194px;height:16px;background:#c6c6c6"></div>
<div class="a" style="left:500px;top:147px;width:1274px;height:6px;background:linear-gradient(90deg,#666 1px,transparent 1px) 1px 0/22.450px 6px repeat-x"></div>
<span class="rn" style="left:501px">8</span><span class="rn" style="left:547px">6</span><span class="rn" style="left:591px">4</span><span class="rn" style="left:635px">2</span>
<span class="rn" style="left:726px">2</span><span class="rn" style="left:770px">4</span><span class="rn" style="left:815px">6</span><span class="rn" style="left:860px">8</span><span class="rn" style="left:906px">10</span><span class="rn" style="left:950px">12</span><span class="rn" style="left:995px">14</span><span class="rn" style="left:1040px">16</span><span class="rn" style="left:1085px">18</span><span class="rn" style="left:1130px">20</span><span class="rn" style="left:1175px">22</span><span class="rn" style="left:1220px">24</span><span class="rn" style="left:1265px">26</span><span class="rn" style="left:1309px">28</span><span class="rn" style="left:1354px">30</span><span class="rn" style="left:1399px">32</span><span class="rn" style="left:1444px">34</span><span class="rn" style="left:1489px">36</span><span class="rn" style="left:1534px">38</span><span class="rn" style="left:1579px">40</span><span class="rn" style="left:1624px">42</span><span class="rn" style="left:1669px">44</span><span class="rn" style="left:1714px">46</span><span class="rn" style="left:1759px">48</span>
<svg class="a" style="left:680px;top:136px" width="30" height="32" viewBox="680 136 30 32"><path d="M687 140h11v3l-5.500 7-5.500-7zM692.500 150l5.500 7v3h-11v-3zM687 160h11v7h-11z" fill="#fff" stroke="#888"/></svg>
<svg class="a" style="left:1572px;top:150px" width="20" height="12" viewBox="1572 150 20 12"><path d="M1576 156l5-5 5 5v5h-10z" fill="#fff" stroke="#888"/></svg>

<!-- floating badge -->
<svg class="a" style="left:1808px;top:935px" width="40" height="40" viewBox="0 0 40 40"><circle cx="20" cy="20" r="20" fill="#dff2e6"/><circle cx="20" cy="20" r="16" fill="#7fd19c"/><path d="M26 10c-9 0-11 8-6 10s2 10-5 10" fill="none" stroke="#fff" stroke-width="3"/></svg>

<!-- status -->
<div class="a sb"></div>
<span class="t st" style="left:8px">第 4 页，共 57 页</span><span class="t st" style="left:124px">25913 个字</span>
<svg class="a" style="left:206px;top:999px" width="18" height="16" viewBox="0 0 18 16"><path d="M1 2h6v10H1zM9 1v14M11 3h3" fill="none" stroke="#666"/><path d="M13 6l4 6M17 6l-4 6" stroke="#555"/></svg>
<span class="t st" style="left:238px">简体中文(中国大陆)</span><span class="t st" style="left:360px">修订: 关闭</span>
<svg class="a" style="left:434px;top:999px" width="18" height="17" viewBox="0 0 18 17"><circle cx="8" cy="8" r="6" fill="none" stroke="#666" stroke-dasharray="12 6"/><path d="M7 7l9 8M15 7l-8 8" stroke="#444" stroke-width="1.600"/></svg>
<span class="t st" style="left:453px;font-weight:700">辅助功能: 调查</span>
<div class="a" style="left:1788px;top:998px;width:40px;height:20px;background:#c6c6c6"></div>
<svg class="a" style="left:1755px;top:998px" width="105" height="20" viewBox="1755 998 105 20"><path d="M1763 1000h8v17h-8zM1763 1003h8M1763 1006h8M1763 1009h8M1763 1012h8M1767 1000v17" fill="none" stroke="#666"/><path d="M1803 1001h10v15h-10zM1805 1004h6M1805 1007h6M1805 1010h6M1805 1013h6" fill="none" stroke="#444"/><path d="M1844 999h8v12h-8zM1846 1002h4M1846 1005h4" fill="none" stroke="#666"/><circle cx="1852" cy="1012" r="3" fill="none" stroke="#2f6db5"/></svg>

<div class="a tb"></div>
<svg class="a" style="left:0;top:1018px" width="1920" height="28" viewBox="0 1018 1920 28"><use href="#tk" y="1018" width="1920" height="28"/></svg>
<span class="t" style="left:1860px;top:1021px;color:#fff">11:37</span><span class="t" style="left:1843px;top:1037px;color:#fff">2025-07-07</span>
</div>
</body></html>
